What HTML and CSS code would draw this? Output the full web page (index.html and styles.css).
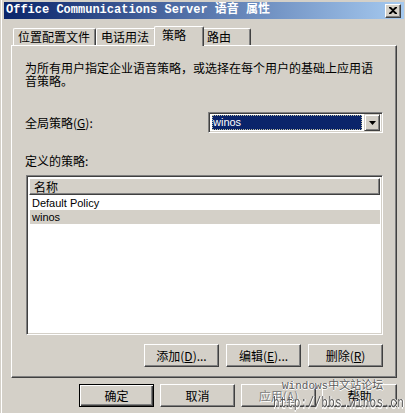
FILE: index.html
```html
<!DOCTYPE html>
<html lang="zh-CN">
<head>
<meta charset="utf-8">
<title>Office Communications Server 语音 属性</title>
<link rel="stylesheet" href="styles.css">
</head>
<body>
<div class="window">
  <div class="titlebar">
    <span class="title">Office Communications Server 语音 属性</span>
    <span class="close"><svg width="8" height="7" viewBox="0 0 8 7"><path d="M0 0h2l2 2 2-2h2v1L5 3.5 8 6v1H6L4 5 2 7H0V6l3-2.5L0 1z" fill="#000"/></svg></span>
  </div>
  <div class="content">
    <div class="tabs">
      <div class="tab t1">位置配置文件</div>
      <div class="tab t2">电话用法</div>
      <div class="tab t3 active">策略</div>
      <div class="tab t4">路由</div>
    </div>
    <div class="panel">
      <p class="desc">为所有用户指定企业语音策略，或选择在每个用户的基础上应用语音策略。</p>
      <div class="field">
        <span class="label">全局策略(<u>G</u>):</span>
        <div class="combo">
          <div class="combo-value"><span>winos</span></div>
          <div class="combo-btn"><svg width="7" height="4" viewBox="0 0 7 4"><path d="M0 0h7L3.5 4z" fill="#000"/></svg></div>
        </div>
      </div>
      <div class="label list-label">定义的策略:</div>
      <div class="list">
        <div class="list-header">名称</div>
        <div class="row">Default Policy</div>
        <div class="row selected">winos</div>
      </div>
      <div class="btn-row">
        <button class="btn">添加(<u>D</u>)...</button>
        <button class="btn">编辑(<u>E</u>)...</button>
        <button class="btn">删除(<u>R</u>)</button>
      </div>
    </div>
    <div class="footer">
      <button class="btn default">确定</button>
      <button class="btn">取消</button>
      <button class="btn disabled">应用(<u>A</u>)</button>
      <button class="btn">帮助</button>
    </div>
  </div>
</div>
<div class="watermark">
  <div class="wm1">Windows中文站论坛</div>
  <div class="wm2">http://bbs.winos.cn</div>
</div>
</body>
</html>
```
FILE: styles.css
```css
* { box-sizing: border-box; }
html, body { margin: 0; padding: 0; }
body {
  width: 405px;
  height: 413px;
  overflow: hidden;
  background: #d4d0c8;
  font-family: "Noto Sans CJK SC", sans-serif;
  font-size: 12px;
  color: #000;
  position: relative;
}
.window {
  height: 413px;
  margin-left: 1px;
  border-left: 1px solid #fff;
  padding: 2px 1px 0 2px;
}
.titlebar {
  height: 17px;
  display: flex;
  align-items: center;
  justify-content: space-between;
  padding: 0 3px 0 2px;
  background: linear-gradient(to right, #0a246a, #a6caf0);
}
.title {
  color: #fff;
  font-family: "Liberation Mono", "Noto Sans CJK SC", monospace;
  font-weight: bold;
  font-size: 12px;
  line-height: 17px;
  white-space: nowrap;
}
.close {
  width: 16px;
  height: 14px;
  display: flex;
  align-items: center;
  justify-content: center;
  background: #d4d0c8;
  border: 1px solid;
  border-color: #fff #404040 #404040 #fff;
  box-shadow: inset -1px -1px #808080;
}
.content {
  padding: 0 7px;
}
.tabs {
  display: flex;
  align-items: flex-end;
  height: 19px;
  margin-top: 7px;
  padding-left: 2px;
}
.tab {
  height: 17px;
  line-height: 15px;
  padding-left: 4px;
  background: #d4d0c8;
  border-top: 1px solid #fff;
  border-left: 1px solid #fff;
  border-right: 1px solid #404040;
  box-shadow: inset -1px 0 #808080;
  border-radius: 2px 2px 0 0;
  white-space: nowrap;
}
.t1 { width: 83px; }
.t2 { width: 60px; }
.t3 { width: 46px; }
.t4 { width: 49px; }
.tab.active {
  position: relative;
  z-index: 1;
  align-self: flex-start;
  height: 20px;
  width: 50px;
  margin: 0 -2px;
  padding-left: 7px;
  line-height: 16px;
}
.panel {
  height: 333px;
  border: 1px solid;
  border-color: #fff #404040 #404040 #fff;
  box-shadow: inset -1px -1px #808080;
  padding: 15px 13px 0 13px;
}
.desc {
  margin: 0;
  line-height: 13px;
  height: 26px;
}
.field {
  display: flex;
  align-items: center;
  justify-content: space-between;
  margin-top: 25px;
  padding-left: 0;
}
.label { line-height: 13px; }
.combo {
  width: 175px;
  height: 21px;
  display: flex;
  background: #fff;
  border: 1px solid;
  border-color: #808080 #fff #fff #808080;
  box-shadow: inset 1px 1px #404040, inset -1px -1px #d4d0c8;
  padding: 2px 2px 2px 3px;
}
.combo-value {
  flex: 1;
  background: #0a246a;
  outline: 1px dotted #c0c0a0;
  outline-offset: -1px;
  color: #fff;
  font-family: "Liberation Sans", sans-serif;
  font-size: 11px;
  line-height: 15px;
  padding-left: 1px;
  margin-right: 2px;
}
.combo-btn {
  width: 16px;
  margin: -1px 0;
  display: flex;
  align-items: center;
  justify-content: center;
  background: #d4d0c8;
  border: 1px solid;
  border-color: #d4d0c8 #404040 #404040 #d4d0c8;
  box-shadow: inset 1px 1px #fff, inset -1px -1px #808080;
}
.list-label {
  margin-top: 21px;
}
.list {
  margin: 8px 0 0 1px;
  height: 160px;
  background: #fff;
  border: 1px solid;
  border-color: #808080 #fff #fff #808080;
  box-shadow: inset 1px 1px #404040, inset -1px -1px #d4d0c8;
  padding: 2px 2px 2px 2px;
}
.list-header {
  height: 17px;
  line-height: 15px;
  padding-left: 4px;
  background: #d4d0c8;
  border: 1px solid;
  border-color: #fff #404040 #404040 #fff;
  box-shadow: inset -1px -1px #808080;
  margin-bottom: 1px;
}
.row {
  height: 14px;
  line-height: 14px;
  margin-left: 1px;
  padding-left: 2px;
  font-family: "Liberation Sans", sans-serif;
  font-size: 11px;
}
.row.selected { background: #d4d0c8; }
.btn-row {
  display: flex;
  justify-content: flex-end;
  gap: 7px;
  margin-top: 9px;
}
.footer {
  display: flex;
  justify-content: flex-end;
  gap: 6px;
  margin-top: 6px;
}
.btn {
  width: 75px;
  height: 23px;
  padding: 0;
  margin: 0;
  font-family: "Noto Sans CJK SC", sans-serif;
  font-size: 12px;
  line-height: 19px;
  color: #000;
  background: #d4d0c8;
  border: 1px solid;
  border-color: #fff #404040 #404040 #fff;
  box-shadow: inset -1px -1px #808080;
  text-align: center;
}
.btn.default {
  border: 1px solid #000;
  box-shadow: inset 1px 1px #fff, inset -1px -1px #404040, inset -2px -2px #808080;
}
.btn.disabled {
  color: #808080;
  text-shadow: 1px 1px #fff;
}
.watermark {
  position: absolute;
  left: 282px;
  top: 379px;
  color: #5a5a5a;
  font-family: "Liberation Mono", "Noto Sans CJK SC", monospace;
  text-shadow: 1px 0 #fff, 0 1px #fff;
  pointer-events: none;
}
.wm1 { font-size: 11px; line-height: 14px; }
.wm2 { font-size: 11px; line-height: 16px; margin-left: -9px; transform: scaleY(1.3); transform-origin: left top; letter-spacing: 0.3px; }
```
